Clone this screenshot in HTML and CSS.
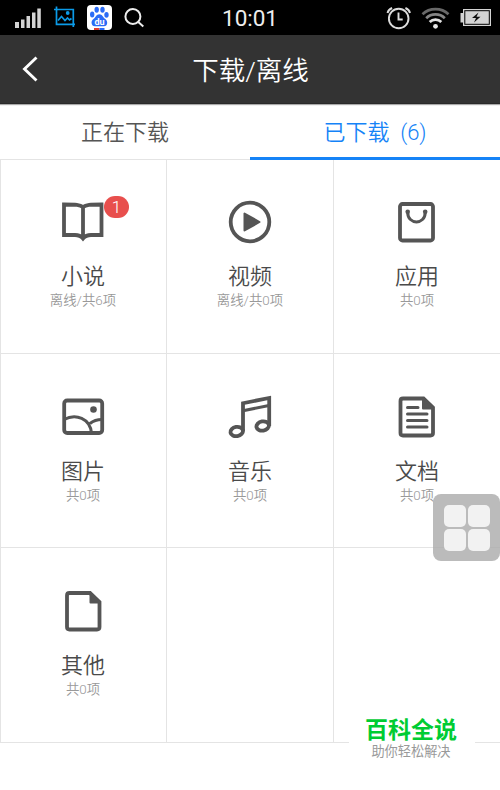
FILE: index.html
```
<!DOCTYPE html>
<html lang="zh-CN">
<head>
<meta charset="utf-8">
<title>下载/离线</title>
<link rel="stylesheet" href="styles.css">
</head>
<body>
<div class="status">
  <svg class="status-left" width="150" height="35" viewBox="0 0 150 35">
    <g fill="#d4d4d4"><path d="M15 22h4v6h-4zM21 19.500h3.500v8.500h-3.500zM26.500 16h3.500v12h-3.500zM32 12.500h3.500v15.500h-3.500zM37.300 8.500h3.500v19.500h-3.500z"/></g>
    <g fill="none" stroke="#0b9be8" stroke-width="1.700"><path d="M56.500 6.500v17.800H75M54 9.500h19.300V27"/><path d="M58 20.500l3.500-4 3.500 4 2.500-2.500 2 2 2-1.500"/></g>
    <circle cx="67.700" cy="13" r="1.900" fill="#0b9be8"/>
    <rect x="87" y="5" width="25" height="25" rx="4" fill="#fff"/>
    <g fill="#2b6cf6"><ellipse cx="92.200" cy="14.500" rx="2.200" ry="2.900"/><ellipse cx="96.700" cy="9.700" rx="2.200" ry="3"/><ellipse cx="102.500" cy="9.700" rx="2.200" ry="3"/><ellipse cx="106.500" cy="14.800" rx="2.200" ry="2.900"/><path d="M99.300 14.200c-3 0-3.600 3-5.600 4.500-1.700 1.300-2.500 2.800-2 5 .7 3 3.500 2.600 7.700 2.600s7 .4 7.700-2.600c.4-2.200-.4-3.700-2.100-5-2-1.500-2.700-4.500-5.700-4.500z"/></g>
    <text class="paw" x="99.500" y="24.800" text-anchor="middle">du</text>
    <path d="M94 28h5.500v2H94z" fill="#e23b2e"/><path d="M99.500 28h5v2h-5z" fill="#2b6cf6"/>
    <g fill="none" stroke="#ededed" stroke-width="2"><circle cx="132.900" cy="16.500" r="7.500"/><path d="M138 21.700l5.300 4.800"/></g>
  </svg>
  <span class="clock">10:01</span>
  <svg class="status-right" width="120" height="35" viewBox="380 0 120 35">
    <g fill="none" stroke="#dcdcdc" stroke-width="1.900"><circle cx="398.700" cy="18.500" r="9.800"/><path d="M398.500 12.500v7h4.200M387.500 13c.5-2 2.200-4 4.600-5M410 13c-.5-2-2.200-4-4.600-5"/></g>
    <g fill="none" stroke-width="2.700"><path d="M422.500 14.300c7-6.800 19-6.800 26 0" stroke="#686868"/><path d="M426.200 18.200c5-5 13.600-5 18.600 0" stroke="#858585"/><path d="M429.700 22c3.200-3.200 8.400-3.200 11.600 0" stroke="#e2e2e2"/></g>
    <circle cx="435.500" cy="26.300" r="2.400" fill="#e8e8e8"/>
    <path d="M463 9h28v17h-28v-3.500h-2.500v-9.500h2.500z" fill="#d4d4d4"/>
    <rect x="464.800" y="10.700" width="24.500" height="13.600" fill="#d4d4d4" stroke="#000" stroke-width="1"/>
    <path d="M478.500 12.500l-6.500 5.600h4l-2 4.400 6.500-5.800h-4z" fill="#111"/>
  </svg>
</div>
<header class="header">
  <svg class="back" width="20" height="30" viewBox="0 0 20 30"><path d="M16.500 3.500L4.500 15l12 11.500" fill="none" stroke="#fff" stroke-width="2.900"/></svg>
  <h1 class="title">下载/离线</h1>
</header>
<nav class="tabs">
  <div class="tab">正在下载</div>
  <div class="tab tab-active">已下载  (6)</div>
</nav>
<main class="grid">
  <section class="cell first">
    <svg class="icon" viewBox="0 0 50 50"><path d="M25 10C22 7.500 18 7.500 6 7.500V38h11c4 0 5.500.5 8 3.500 2.500-3 4-3.500 8-3.500h10.500V7.500C32 7.500 28 7.500 25 10zV40" class="line"/></svg>
    <span class="badge">1</span>
    <div class="name">小说</div><div class="count">离线/共6项</div>
  </section>
  <section class="cell">
    <svg class="icon" viewBox="0 0 50 50"><circle cx="25" cy="25" r="19.300" class="line"/><path d="M19.500 16.500v17l15-8.500z" class="solid"/></svg>
    <div class="name">视频</div><div class="count">离线/共0项</div>
  </section>
  <section class="cell">
    <svg class="icon" viewBox="0 0 50 50"><rect x="8" y="7" width="33" height="36.500" rx="2.500" class="line"/><path d="M15.700 15.500c0 12.500 17.500 12.500 17.500 0" class="line thin"/><circle cx="15.700" cy="14.800" r="2.300" fill="#555"/><circle cx="33.200" cy="14.800" r="2.300" fill="#555"/></svg>
    <div class="name">应用</div><div class="count">共0项</div>
  </section>
  <section class="cell first low">
    <svg class="icon" viewBox="0 0 50 50"><rect x="6.200" y="8.500" width="38" height="32.500" rx="3" class="line"/><path d="M6 27.500c12-6.500 26-1 27.500 13.500M32 31.500c3-2.500 7-4 12-4" class="line thin"/><circle cx="35.500" cy="17.500" r="3.300" fill="#555"/></svg>
    <div class="name">图片</div><div class="count">共0项</div>
  </section>
  <section class="cell low">
    <svg class="icon" viewBox="0 0 50 50"><g class="line"><ellipse cx="11.700" cy="39.500" rx="6.300" ry="4.600" transform="rotate(-10 11.700 39.500)"/><ellipse cx="37.700" cy="34" rx="6.300" ry="4.600" transform="rotate(-10 37.700 34)"/><path d="M18 39.500V11.200L44.200 6v28"/><path d="M18 18.800l26-5.300" class="thin"/></g></svg>
    <div class="name">音乐</div><div class="count">共0项</div>
  </section>
  <section class="cell low">
    <svg class="icon" viewBox="0 0 50 50"><path d="M11 6.500h20.500l9.500 9v25.500q0 2.500-2.500 2.500h-27.500q-2.500 0-2.500-2.500V9q0-2.500 2.500-2.500z" class="line"/><path d="M31 6v10.500h10z" class="solid"/><path d="M15.500 15.500H26M15.500 22H35M15.500 28.500H35M15.500 35H35" class="line thin round"/></svg>
    <div class="name">文档</div><div class="count">共0项</div>
  </section>
  <section class="cell first low">
    <svg class="icon" viewBox="0 0 50 50"><path d="M11.500 7H32l9.500 9v25q0 2.500-2.500 2.500H11.500Q9 43.500 9 41V9.500Q9 7 11.500 7z" class="line"/><path d="M32.500 7v9.500h9.500z" class="solid"/></svg>
    <div class="name">其他</div><div class="count">共0项</div>
  </section>
  <section class="cell"></section>
  <section class="cell"></section>
</main>
<div class="assist"><i></i><i></i><i></i><i></i></div>
<div class="brand"><div class="brand-name">百科全说</div><div class="brand-sub">助你轻松解决</div></div>
</body>
</html>
```
FILE: styles.css
```
* { box-sizing: border-box; }
body {
  margin: 0;
  width: 500px;
  height: 790px;
  position: relative;
  overflow: hidden;
  background: #fff;
  font-family: Roboto, "Noto Sans CJK SC", sans-serif;
  font-weight: 350;
}
.status {
  height: 35px;
  display: flex;
  justify-content: space-between;
  background: #000;
}
.status-right { margin-left: 30px; }
.paw { font: bold 9px Roboto, sans-serif; fill: #fff; }
.clock { font-size: 22.5px; font-weight: 400; line-height: 36px; color: #eee; }
.header {
  height: 69px;
  display: flex;
  align-items: center;
  background: #333;
  border-bottom: 1px solid #2a2a2a;
  box-shadow: 0 1px 1px #aaa;
  position: relative;
}
.back { margin-left: 20px; }
.title {
  flex: 1;
  margin: 4px 39px 0 0;
  text-align: center;
  font-size: 26.5px;
  font-weight: 350;
  line-height: 40px;
  color: #fff;
}
.tabs { display: flex; height: 56px; position: relative; z-index: 1; }
.tab {
  flex: 1;
  text-align: center;
  white-space: pre;
  font-size: 22px;
  line-height: 57px;
  color: #555;
}
.tab-active { color: #1583f7; border-bottom: 3px solid #1583f7; }
.grid {
  display: grid;
  margin-top: -1px;
  grid-template-columns: 166px 167px 167px;
  grid-template-rows: 194px 194px 195px;
  border-bottom: 1px solid #e4e4e4;
}
.cell {
  display: flex;
  flex-direction: column;
  align-items: center;
  position: relative;
  padding-top: 37px;
  border-top: 1px solid #e4e4e4;
  border-left: 1px solid #e4e4e4;
}
.first { padding-right: 1px; }
.low { padding-top: 38px; }
.icon { width: 50px; height: 50px; display: block; }
.line { fill: none; stroke: #555; stroke-width: 3.8; }
.thin { stroke-width: 3; }
.round { stroke-linecap: round; }
.solid { fill: #555; stroke: #555; stroke-width: 2; stroke-linejoin: round; }
.badge {
  position: absolute;
  left: 103px;
  top: 36px;
  width: 25px;
  height: 22px;
  border-radius: 11px;
  background: #e84f4d;
  color: #fff;
  font-size: 17px;
  line-height: 22px;
  text-align: center;
}
.name { margin-top: 14px; font-size: 22px; line-height: 32px; color: #4a4a4a; }
.count { margin-top: -1px; font-size: 13.4px; line-height: 18px; color: #999; }
.assist {
  position: absolute;
  left: 433px;
  top: 494px;
  width: 67px;
  height: 67px;
  padding: 11px;
  display: grid;
  grid-template-columns: 22px 22px;
  grid-template-rows: 22px 22px;
  gap: 2px;
  border-radius: 8px;
  background: rgba(170, 170, 170, .8);
}
.assist i { border-radius: 5px; background: #f2f2f2; }
.brand {
  position: absolute;
  left: 349px;
  top: 706px;
  width: 126px;
  height: 64px;
  padding: 10px 2px 0 0;
  background: #fff;
  text-align: center;
}
.brand-name { font-size: 23px; font-weight: 700; line-height: 30px; color: #0c3; }
.brand-sub { font-size: 13.2px; font-weight: 400; line-height: 12px; color: #999; }
```
